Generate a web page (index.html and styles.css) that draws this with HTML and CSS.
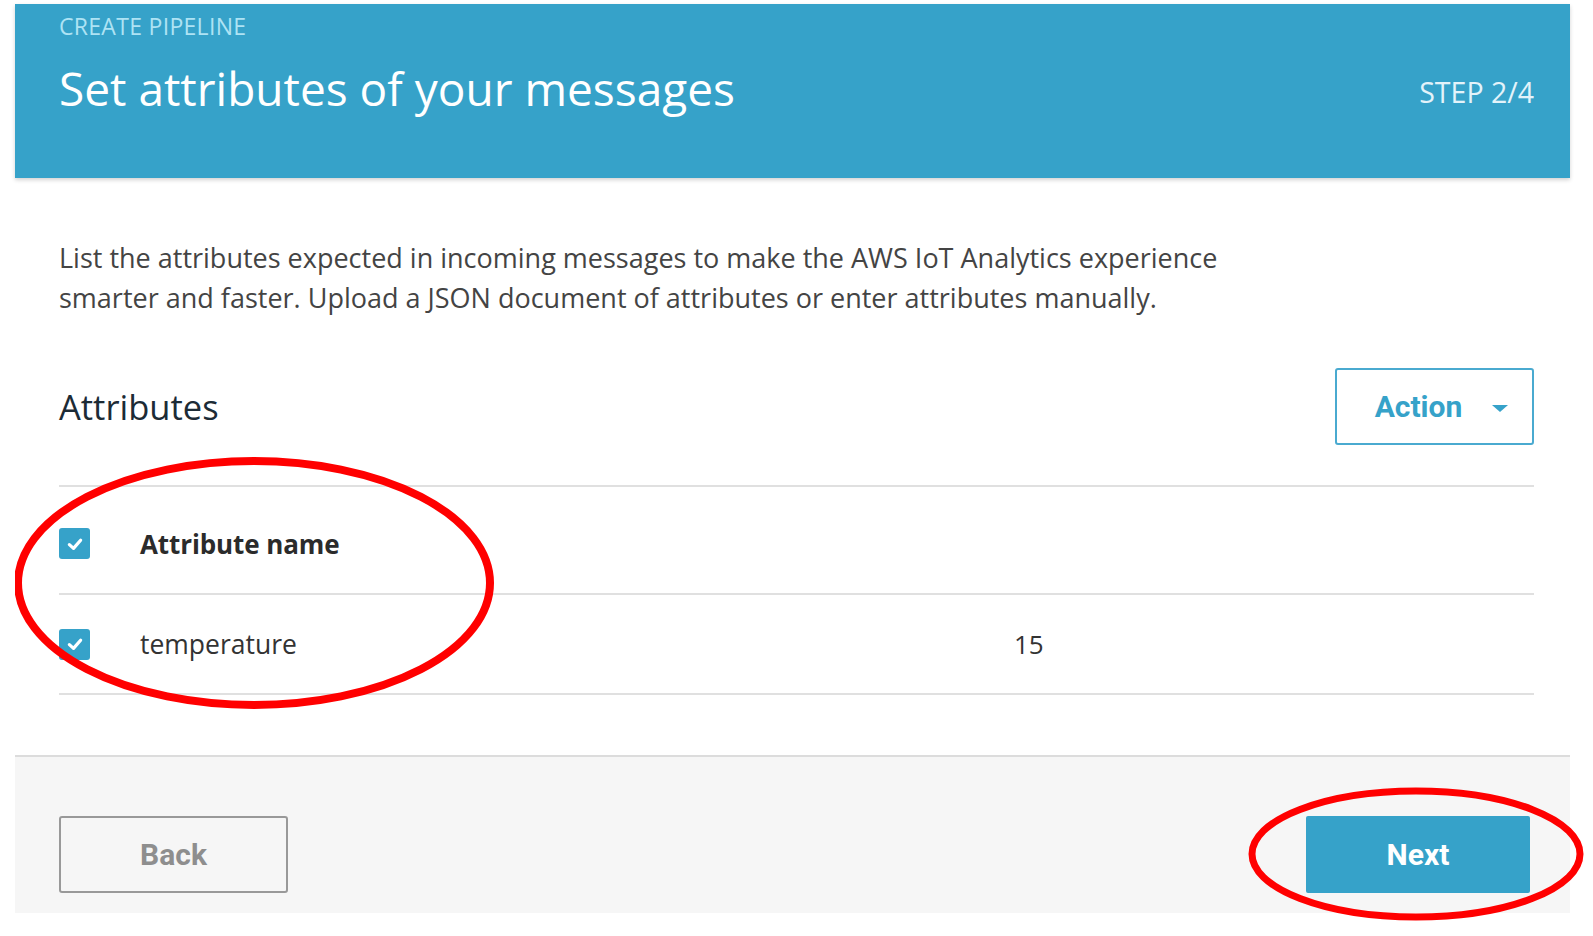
FILE: index.html
```html
<!DOCTYPE html>
<html>
<head>
<meta charset="utf-8">
<link rel="stylesheet" href="styles.css">
</head>
<body>
<div class="page">
  <header class="header">
    <div class="kicker">CREATE PIPELINE</div>
    <div class="title-row">
      <h1 class="title">Set attributes of your messages</h1>
      <div class="step">STEP 2/4</div>
    </div>
  </header>
  <main class="main">
    <p class="intro">List the attributes expected in incoming messages to make the AWS IoT Analytics experience<br>smarter and faster. Upload a JSON document of attributes or enter attributes manually.</p>
    <div class="section-row">
      <h2 class="section-title">Attributes</h2>
      <button class="btn-action">Action <span class="caret"></span></button>
    </div>
    <div class="table">
      <div class="row row-head">
        <div class="cell-check"><span class="checkbox"><svg viewBox="0 0 16 16" width="16" height="16"><path d="M3.5 8.5 L6.8 11.5 L12.5 5" fill="none" stroke="#fff" stroke-width="2.6" stroke-linecap="round" stroke-linejoin="round"/></svg></span></div>
        <div class="cell-name head-text">Attribute name</div>
        <div class="cell-value"></div>
      </div>
      <div class="row row-body">
        <div class="cell-check"><span class="checkbox"><svg viewBox="0 0 16 16" width="16" height="16"><path d="M3.5 8.5 L6.8 11.5 L12.5 5" fill="none" stroke="#fff" stroke-width="2.6" stroke-linecap="round" stroke-linejoin="round"/></svg></span></div>
        <div class="cell-name">temperature</div>
        <div class="cell-value">15</div>
      </div>
    </div>
  </main>
  <footer class="footer">
    <button class="btn-back">Back</button>
    <button class="btn-next">Next</button>
  </footer>
  <svg class="marks" width="1593" height="936" viewBox="0 0 1593 936">
    <defs><clipPath id="clip"><rect x="15" y="0" width="1578" height="936"/></clipPath></defs>
    <g clip-path="url(#clip)">
      <ellipse cx="254" cy="583" rx="236" ry="122" fill="none" stroke="#f00" stroke-width="8"/>
      <ellipse cx="1416" cy="854" rx="164" ry="63" fill="none" stroke="#f00" stroke-width="7"/>
    </g>
  </svg>
</div>
</body>
</html>
```

FILE: styles.css
```css
* { box-sizing: border-box; }
html, body { margin: 0; padding: 0; background: #fff; }
body { font-family: "Open Sans", "Noto Sans", sans-serif; }
.page { position: relative; width: 1593px; height: 936px; overflow: hidden; padding-top: 4px; }

.header {
  margin-left: 15px;
  width: 1555px;
  height: 174px;
  background: #36a2c9;
  padding: 12px 36px 0 44px;
  box-shadow: 0 2px 4px rgba(0,0,0,0.18);
}
.kicker { font-size: 23px; line-height: 20px; color: #aee3f4; letter-spacing: 0.3px; }
.title-row { display: flex; justify-content: space-between; align-items: center; margin-top: 26px; }
.title { margin: 0; font-weight: 400; font-size: 46px; line-height: 52px; color: #fff; }
.step { font-size: 28.5px; color: #e3f3fa; margin-top: 8px; }

.main { margin-left: 15px; width: 1555px; padding: 60px 36px 0 44px; }
.intro { margin: 0; font-size: 27px; line-height: 40px; color: #444; }
.section-row { display: flex; justify-content: space-between; align-items: center; margin-top: 50px; }
.section-title { margin: 0; font-weight: 400; font-size: 34.5px; color: #1c2b36; }
.btn-action {
  width: 199px; height: 77px;
  border: 2px solid #4aaad0; border-radius: 3px; background: #fff;
  color: #36a2c9; font-family: "Roboto", sans-serif; font-weight: 700; font-size: 30px;
  display: flex; align-items: center; justify-content: center; gap: 30px; padding: 0 0 0 14px;
}
.caret { width: 0; height: 0; border-left: 8px solid transparent; border-right: 8px solid transparent; border-top: 7px solid #36a2c9; margin-top: 3px; }

.table { margin-top: 40px; border-top: 2px solid #e0e0e0; }
.row { display: flex; align-items: center; border-bottom: 2px solid #e0e0e0; }
.row-head { height: 108px; padding-top: 7px; }
.row-body { height: 100px; }
.cell-check { width: 81px; display: flex; align-items: center; }
.checkbox { width: 31px; height: 31px; border-radius: 3px; background: #36a2c9; display: flex; align-items: center; justify-content: center; }
.checkbox svg { width: 20px; height: 20px; }
.cell-name { width: 874px; font-size: 26.5px; color: #333; }
.head-text { font-weight: 700; font-size: 26px; color: #2b2b2b; letter-spacing: -0.1px; }
.cell-value { font-size: 26px; color: #333; }

.footer {
  margin: 60px 0 0 15px; width: 1555px; height: 158px;
  background: #f6f6f6; border-top: 2px solid #dcdcdc;
  display: flex; justify-content: space-between; align-items: flex-start;
  padding: 59px 40px 0 44px;
}
.btn-back {
  width: 229px; height: 77px; border: 2px solid #999; border-radius: 3px; background: #f6f6f6;
  color: #8e8e8e; font-family: "Roboto", sans-serif; font-weight: 700; font-size: 30px;
}
.btn-next {
  width: 224px; height: 77px; border: none; border-radius: 2px; background: #36a2c9;
  color: #fff; font-family: "Roboto", sans-serif; font-weight: 700; font-size: 30px;
}
.marks { position: absolute; left: 0; top: 0; pointer-events: none; }
```
